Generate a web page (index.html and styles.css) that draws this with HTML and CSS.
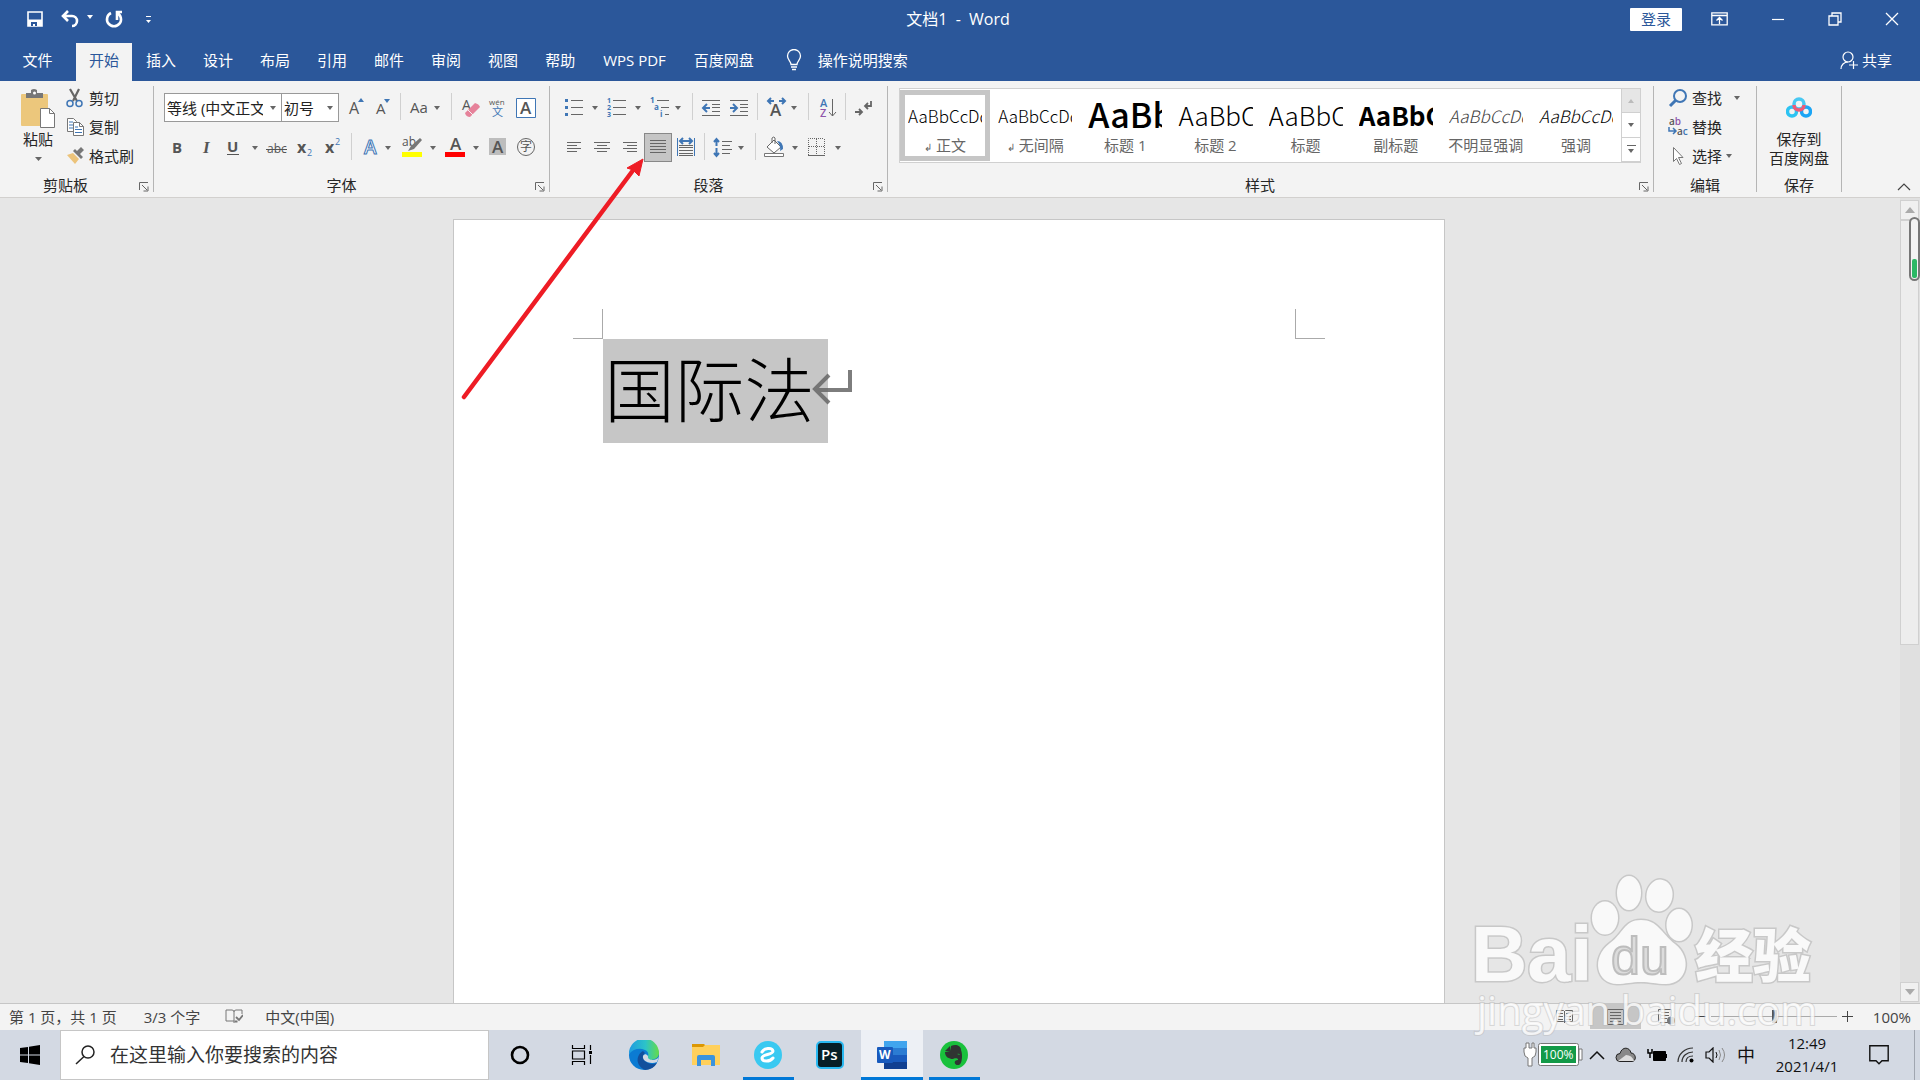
FILE: index.html
```html
<!DOCTYPE html>
<html lang="zh-CN">
<head>
    <meta charset="UTF-8">
    <meta name="viewport" content="width=device-width, initial-scale=1.0">
    <title>文档1 - Word</title>
    <link rel="stylesheet" href="styles.css">
</head>
<body>
    <header class="title-bar">
        <div class="quick-access">
            <button aria-label="保存"><svg width="16" height="16" viewBox="0 0 16 16"><path d="M1 1h14v14H1z" fill="none" stroke="#fff" stroke-width="1.6"/><path d="M1 8.5h14V15H1z" fill="#fff"/><path d="M4 11h6v4H8v-2H6v2H4z" fill="#2b579a"/></svg></button>
            <button aria-label="撤消"><svg width="32" height="18" viewBox="0 0 32 18"><path d="M7 1L2 6l5 5M2 6h9a5 5 0 0 1 0 10" fill="none" stroke="#fff" stroke-width="2.6"/><path d="M26 5h6l-3 4z" fill="#fff"/></svg></button>
            <button aria-label="重复"><svg width="18" height="18" viewBox="0 0 18 18"><path d="M6 3a7 7 0 1 0 6 0M12 10V2h5" fill="none" stroke="#fff" stroke-width="2.6"/></svg></button>
            <button aria-label="自定义快速访问工具栏"><svg width="8" height="10" viewBox="0 0 8 10"><path d="M1 2.500h5" stroke="#fff"/><path d="M1 6h5L3.500 9z" fill="#fff"/></svg></button>
        </div>
        <div class="doc-title">文档1&nbsp; -&nbsp; Word</div>
        <div class="window-buttons">
            <button class="login">登录</button>
            <button aria-label="功能区显示选项"><svg width="17" height="14" viewBox="0 0 17 14"><path d="M.8.8h15.400v12H.8zM1 3.500h15M8.500 12V6M5.500 8.500l3-3 3 3" fill="none" stroke="#fff" stroke-width="1.300"/></svg></button>
            <button aria-label="最小化"><svg width="14" height="14" viewBox="0 0 14 14"><path d="M1 7.500h12" stroke="#fff" stroke-width="1.200"/></svg></button>
            <button aria-label="还原"><svg width="14" height="14" viewBox="0 0 14 14"><path d="M1 4h9v9H1zM4 4V1h9v9h-3" fill="none" stroke="#fff" stroke-width="1.300"/></svg></button>
            <button aria-label="关闭"><svg width="14" height="14" viewBox="0 0 14 14"><path d="M1 1l12 12M13 1L1 13" stroke="#fff" stroke-width="1.300"/></svg></button>
        </div>
    </header>

    <nav class="tabs">
        <button class="file">文件</button>
        <button class="active">开始</button>
        <button>插入</button>
        <button>设计</button>
        <button>布局</button>
        <button>引用</button>
        <button>邮件</button>
        <button>审阅</button>
        <button>视图</button>
        <button>帮助</button>
        <button class="addin">WPS PDF</button>
        <button>百度网盘</button>
        <button class="tell-me"><svg width="16" height="22" viewBox="0 0 16 22"><path d="M5 15.500c0-3-3.500-4.500-3.500-8.500a6.500 6.500 0 0 1 13 0c0 4-3.500 5.500-3.500 8.500zM5 18h6M6 20.500h4" fill="none" stroke="#fff" stroke-width="1.300"/></svg>操作说明搜索</button>
        <button class="share"><svg width="18" height="18" viewBox="0 0 18 18"><circle cx="8" cy="6" r="5" fill="none" stroke="#fff" stroke-width="1.200"/><path d="M1 18c0-4 3-7 7-7M9 14h9M13.500 10v8" fill="none" stroke="#fff" stroke-width="1.200"/></svg>共享</button>
    </nav>

    <section class="ribbon">
        <div class="group clipboard">
            <div class="group-body">
                <button class="big-button">
                    <svg width="34" height="40" viewBox="0 0 34 40"><rect y="5" width="27" height="32" rx="1" fill="#ecc77c"/><path d="M5 4h5V1q3-2 6 0v3h6v5H5z" fill="#777"/><circle cx="13.500" cy="4" r="1.500" fill="#fff"/><path d="M19.500 19.500h9l5 5v14h-14z" fill="#fff" stroke="#777"/><path d="M28.500 19.500v5h5" fill="none" stroke="#777"/></svg>
                    <span>粘贴</span>
                    <svg width="7" height="4" viewBox="0 0 7 4"><path class="caret" d="M0 0h7l-3.500 4z"/></svg>
                </button>
                <div class="button-list">
                    <button><svg width="18" height="20" viewBox="0 0 18 20"><path d="M4 1l7 12M13 1L7 13" stroke="#666" stroke-width="2.200"/><circle cx="4" cy="15.500" r="3" fill="none" stroke="#3f76b5" stroke-width="1.500"/><circle cx="13" cy="15.500" r="3" fill="none" stroke="#3f76b5" stroke-width="1.500"/></svg>剪切</button>
                    <button><svg width="18" height="20" viewBox="0 0 18 20"><path d="M1.500 1.500h6l3 3v10h-9z" fill="#fff" stroke="#777"/><path d="M3 5h4M3 8h4M3 11h4" stroke="#3f76b5"/><path d="M7.500 5.500h6l4 4v9h-10z" fill="#fff" stroke="#777"/><path d="M13.500 5.500v4h4" fill="none" stroke="#777"/><path d="M9 10h3M9 12.500h7M9 15.500h7" stroke="#3f76b5"/></svg>复制</button>
                    <button><svg width="18" height="20" viewBox="0 0 18 20"><path d="M1 9l6-2 6 6-4 5z" fill="#ecc37a"/><path d="M7 5l8 8 2-2-3-3 4-4-3-3-4 4-2-2z" fill="#777"/></svg>格式刷</button>
                </div>
            </div>
            <div class="group-foot">剪贴板<button class="launcher" aria-label="剪贴板设置"><svg width="10" height="10" viewBox="0 0 10 10"><path d="M.5 8V.5H9M3 3l5 5M9 4.500V9H4.500" fill="none" stroke="#666"/></svg></button></div>
        </div>

        <div class="group font">
            <div class="group-body">
                <div class="tool-row font-row-1">
                    <label class="combo"><select aria-label="字体"><option>等线 (中文正文)</option></select></label>
                    <label class="combo size"><select aria-label="字号"><option>初号</option></select></label>
                    <button aria-label="增大字号"><svg width="32" height="29"><text x="10" y="21" font-size="16" class="glyph">A</text><path d="M19 9h6l-3-4z" fill="#3f76b5"/></svg></button>
                    <button aria-label="减小字号"><svg width="24" height="29"><text x="5" y="21" font-size="15" class="glyph">A</text><path d="M13 6h6l-3 4z" fill="#3f76b5"/></svg></button>
                    <i class="sep"></i>
                    <button aria-label="更改大小写"><svg width="40" height="29"><text x="4" y="20" font-size="15" class="glyph">Aa</text><path class="caret" d="M28 13h6l-3 4z"/></svg></button>
                    <i class="sep"></i>
                    <button aria-label="清除所有格式"><svg width="28" height="29"><text x="5" y="17" font-size="14" class="glyph">A</text><path d="M8 20l10-10q4 1 5 4L13 24q-4 0-5-4z" fill="#e6829a"/><path d="M11 17l5 5" stroke="#f3f3f3"/></svg></button>
                    <button aria-label="拼音指南"><svg width="24" height="29"><text x="4" y="12" font-size="8" class="glyph">wén</text><text x="7" y="23" font-size="11" fill="#3f76b5">文</text></svg></button>
                    <button aria-label="字符边框"><svg width="34" height="29"><path d="M7.500 5.500h19v19h-19z" fill="#fff" stroke="#3f76b5"/><text x="11" y="21" font-size="17" class="glyph strong">A</text></svg></button>
                </div>
                <div class="tool-row font-row-2">
                    <button aria-label="加粗"><svg width="26" height="29"><text x="8" y="20" font-size="15" class="glyph bold">B</text></svg></button>
                    <button aria-label="倾斜"><svg width="32" height="29"><text x="13" y="20" font-size="17" class="glyph italic">I</text></svg></button>
                    <button aria-label="下划线"><svg width="42" height="29"><text x="5" y="19" font-size="15" class="glyph bold">U</text><path d="M5 21.500h12" stroke="#555"/><path class="caret" d="M30 13h6l-3 4z"/></svg></button>
                    <button aria-label="删除线"><svg width="26" height="29"><text x="3" y="20" font-size="12" class="glyph">abc</text><path d="M2 16.500h21" stroke="#555"/></svg></button>
                    <button aria-label="下标"><svg width="30" height="29"><text x="7" y="20" font-size="16" class="glyph bold">x</text><text x="17" y="23" font-size="9" fill="#3f76b5">2</text></svg></button>
                    <button aria-label="上标"><svg width="26" height="29"><text x="5" y="20" font-size="16" class="glyph bold">x</text><text x="15" y="12" font-size="9" fill="#3f76b5">2</text></svg></button>
                    <i class="sep"></i>
                    <button aria-label="文本效果"><svg width="40" height="29"><text x="8" y="21" font-size="19" class="text-effect">A</text><path class="caret" d="M29 13h6l-3 4z"/></svg></button>
                    <button aria-label="突出显示"><svg width="44" height="29"><text x="6" y="13" font-size="12" class="glyph">ab</text><path d="M12 18l3-5 9-8 2 2-8 9z" fill="#777"/><path d="M6 19h20v5H6z" fill="#ff0"/><path class="caret" d="M34 13h6l-3 4z"/></svg></button>
                    <button aria-label="字体颜色"><svg width="44" height="29"><text x="10" y="17" font-size="17" class="glyph strong">A</text><path d="M5 19h20v5H5z" fill="red"/><path class="caret" d="M33 13h6l-3 4z"/></svg></button>
                    <button aria-label="字符底纹"><svg width="27" height="29"><path d="M5 5h17v17H5z" fill="#bdbdbd"/><text x="8" y="20" font-size="17" class="glyph strong">A</text></svg></button>
                    <button aria-label="带圈字符"><svg width="30" height="29"><circle cx="15" cy="14" r="8.500" fill="none" stroke="#666"/><text x="9" y="18" font-size="12" class="glyph">字</text></svg></button>
                </div>
            </div>
            <div class="group-foot">字体<button class="launcher" aria-label="字体设置"><svg width="10" height="10" viewBox="0 0 10 10"><path d="M.5 8V.5H9M3 3l5 5M9 4.500V9H4.500" fill="none" stroke="#666"/></svg></button></div>
        </div>

        <div class="group paragraph">
            <div class="group-body">
                <div class="tool-row para-row-1">
                    <button aria-label="项目符号"><svg width="44" height="29"><path d="M11 7.500h12M11 14.500h12M11 21.500h12" class="line"/><path d="M5 6h3v3H5zM5 13h3v3H5zM5 20h3v3H5z" fill="#3f76b5"/><path class="caret" d="M32 13h6l-3 4z"/></svg></button>
                    <button aria-label="编号"><svg width="42" height="29"><path d="M9 7.500h13M9 14.500h13M9 21.500h13" class="line"/><g fill="#3f76b5" font-size="7" font-weight="700"><text x="3" y="10">1</text><text x="3" y="17">2</text><text x="3" y="24">3</text></g><path class="caret" d="M31 13h6l-3 4z"/></svg></button>
                    <button aria-label="多级列表"><svg width="40" height="29"><path d="M11 7.500h12M15 14.500h8M19 21.500h4" class="line"/><g fill="#3f76b5" font-size="8" font-weight="700"><text x="4" y="10">1</text><text x="8" y="17">a</text><text x="14" y="24">i</text></g><path class="caret" d="M29 13h6l-3 4z"/></svg></button>
                    <i class="sep"></i>
                    <button aria-label="减少缩进量"><svg width="26" height="29"><path d="M4 7.500h18M14 11.500h8M14 14.500h8M14 18.500h8M4 22.500h18" class="line"/><path d="M12 15H6M9 11l-4 4 4 4" class="blue-line"/></svg></button>
                    <button aria-label="增加缩进量"><svg width="28" height="29"><path d="M6 7.500h18M16 11.500h8M16 14.500h8M16 18.500h8M6 22.500h18" class="line"/><path d="M6 15h6M9 11l4 4-4 4" class="blue-line"/></svg></button>
                    <i class="sep"></i>
                    <button aria-label="中文版式"><svg width="40" height="29"><text x="8" y="23" font-size="17" class="glyph strong">A</text><path d="M12 8H6M9 5L6 8l3 3M17 8h6M20 5l3 3-3 3" class="blue-line"/><path class="caret" d="M29 13h6l-3 4z"/></svg></button>
                    <i class="sep"></i>
                    <button aria-label="排序"><svg width="26" height="29"><text x="5" y="14" font-size="11" font-weight="600" fill="#3f76b5">A</text><text x="5" y="24" font-size="11" font-weight="600" fill="#8e55aa">Z</text><path d="M17.500 6v17M14 19l3.500 4 3.500-4" class="line"/></svg></button>
                    <i class="sep"></i>
                    <button aria-label="显示编辑标记"><svg width="30" height="29"><path d="M22 8v5h-6M19 10l-3 3 3 3M6 19h7M10 16l3 3-3 3" fill="none" stroke="#666" stroke-width="1.800"/></svg></button>
                </div>
                <div class="tool-row para-row-2">
                    <button aria-label="左对齐"><svg width="28" height="29"><path d="M7 9.500h14M7 12.500h10M7 15.500h14M7 18.500h10" class="line"/></svg></button>
                    <button aria-label="居中"><svg width="28" height="29"><path d="M6 9.500h16M9 12.500h10M6 15.500h16M9 18.500h10" class="line"/></svg></button>
                    <button aria-label="右对齐"><svg width="28" height="29"><path d="M7 9.500h14M11 12.500h10M7 15.500h14M11 18.500h10" class="line"/></svg></button>
                    <button class="pressed" aria-label="两端对齐"><svg width="26" height="27"><path d="M5 6.500h16M5 9.500h16M5 12.500h16M5 15.500h16M5 18.500h16" class="line"/></svg></button>
                    <button aria-label="分散对齐"><svg width="28" height="29"><path d="M7 12.500h14M7 14.500h14M7 17.500h14M7 20.500h14M7 22.500h14" class="line"/><path d="M5.500 5v18M22.500 5v18" stroke="#3f76b5"/><path d="M8 8h12M11 5L8 8l3 3M17 5l3 3-3 3" class="blue-line"/></svg></button>
                    <i class="sep"></i>
                    <button aria-label="行距"><svg width="42" height="29"><path d="M14 8.500h10M14 12.500h8M14 16.500h10M14 20.500h8" class="line"/><path d="M8.500 7v6M6 9l2.500-3L11 9M8.500 15v7M6 20l2.500 3 2.500-3" class="blue-line"/><path class="caret" d="M30 13h6l-3 4z"/></svg></button>
                    <i class="sep"></i>
                    <button aria-label="底纹"><svg width="41" height="29"><path d="M6 14l7-7 7 7-7 6zM11 10V5q2-2 3 0v6" fill="#fff" stroke="#666"/><path d="M16 8q6 0 6 8l-3 2q1-5-3-10" fill="#3f76b5"/><path d="M3.500 20.500h19v3h-19z" fill="#fff" stroke="#777"/><path class="caret" d="M31 13h6l-3 4z"/></svg></button>
                    <button aria-label="边框"><svg width="44" height="29"><path d="M6.500 22V5.500H22M22.500 6v16M14.500 6v16M7 13.500h15" fill="none" stroke="#666" stroke-dasharray="1 1"/><path d="M6 22.500h17" class="line"/><path class="caret" d="M33 13h6l-3 4z"/></svg></button>
                </div>
            </div>
            <div class="group-foot">段落<button class="launcher" aria-label="段落设置"><svg width="10" height="10" viewBox="0 0 10 10"><path d="M.5 8V.5H9M3 3l5 5M9 4.500V9H4.500" fill="none" stroke="#666"/></svg></button></div>
        </div>

        <div class="group styles">
            <div class="group-body">
                <div class="gallery">
                    <button class="style selected"><span class="sample">AaBbCcDd</span><span class="style-name"><small>↲</small> 正文</span></button>
                    <button class="style"><span class="sample">AaBbCcDd</span><span class="style-name"><small>↲</small> 无间隔</span></button>
                    <button class="style"><span class="sample h1">AaBb</span><span class="style-name">标题 1</span></button>
                    <button class="style"><span class="sample h2">AaBbC</span><span class="style-name">标题 2</span></button>
                    <button class="style"><span class="sample h2">AaBbC</span><span class="style-name">标题</span></button>
                    <button class="style"><span class="sample h2 heavy">AaBbC</span><span class="style-name">副标题</span></button>
                    <button class="style"><span class="sample slant muted">AaBbCcDd</span><span class="style-name">不明显强调</span></button>
                    <button class="style"><span class="sample slant">AaBbCcDd</span><span class="style-name">强调</span></button>
                    <div class="gallery-scroll">
                        <button class="off" aria-label="上一行"><svg width="7" height="4"><path d="M0 4h6L3 0z" fill="#bbb"/></svg></button>
                        <button aria-label="下一行"><svg width="7" height="4"><path class="caret" d="M0 0h6L3 4z"/></svg></button>
                        <button aria-label="其他"><svg width="9" height="8"><path d="M0 .5h9" stroke="#666"/><path class="caret" d="M1 4h6L4 8z"/></svg></button>
                    </div>
                </div>
            </div>
            <div class="group-foot">样式<button class="launcher" aria-label="样式设置"><svg width="10" height="10" viewBox="0 0 10 10"><path d="M.5 8V.5H9M3 3l5 5M9 4.500V9H4.500" fill="none" stroke="#666"/></svg></button></div>
        </div>

        <div class="group editing">
            <div class="group-body">
                <div class="button-list">
                    <button><svg width="20" height="20" viewBox="0 0 20 20"><circle cx="12" cy="8" r="6" fill="none" stroke="#3f76b5" stroke-width="2"/><path d="M8 12l-6 6" stroke="#3f76b5" stroke-width="3"/></svg>查找<svg class="far-caret" width="7" height="4"><path class="caret" d="M0 0h6L3 4z"/></svg></button>
                    <button><svg width="20" height="20" viewBox="0 0 20 20"><g font-size="10" font-weight="600"><text x="1" y="8" fill="#555">a<tspan fill="#8e55aa">b</tspan></text><text x="9" y="18" fill="#555">a<tspan fill="#3f76b5">c</tspan></text></g><path d="M1 10v4h6M5 11l3 3-3 3" fill="none" stroke="#3f76b5" stroke-width="1.500"/></svg>替换</button>
                    <button><svg width="20" height="20" viewBox="0 0 20 20"><path d="M5.500 1.500v14l3-3 3 6 2-1-3-6h4.500z" fill="#fff" stroke="#777"/></svg>选择<svg width="7" height="4"><path class="caret" d="M0 0h6L3 4z"/></svg></button>
                </div>
            </div>
            <div class="group-foot">编辑</div>
        </div>

        <div class="group saving">
            <div class="group-body">
                <button class="big-button cloud">
                    <svg width="26" height="22" viewBox="0 0 26 22"><g fill="none" stroke-width="3.500"><circle cx="6" cy="14.500" r="4.500" stroke="#2cc3f2"/><circle cx="20" cy="14.500" r="4.500" stroke="#1ba5f5"/><circle cx="13" cy="7" r="5" stroke="#48c8f2"/><path d="M8 8a5 5 0 0 0 10 0" stroke="#ef5a76"/></g></svg>
                    <span>保存到<br>百度网盘</span>
                </button>
            </div>
            <div class="group-foot">保存</div>
        </div>
        <button class="collapse" aria-label="折叠功能区"><svg width="14" height="8" viewBox="0 0 14 8"><path d="M1 7l6-6 6 6" fill="none" stroke="#444" stroke-width="1.200"/></svg></button>
    </section>

    <main class="workspace">
        <div class="canvas">
            <article class="page">
                <div class="crop-marks"><i class="mark-left"></i><i class="mark-right"></i></div>
                <p class="line-text"><span class="selection">国际法</span><svg class="return" width="40" height="36" viewBox="0 0 40 36"><path d="M38 1v20H4M17 6L3 20l14 14" fill="none" stroke="#666" stroke-width="4" opacity=".85"/></svg></p>
            </article>
        </div>
        <div class="scrollbar">
            <button aria-label="向上滚动"><svg width="10" height="6"><path d="M0 6h10L5 0z" fill="#aaa"/></svg></button>
            <div class="thumb"></div>
            <button class="down" aria-label="向下滚动"><svg width="10" height="6"><path d="M0 0h10L5 6z" fill="#aaa"/></svg></button>
            <div class="meter"></div>
        </div>
    </main>

    <footer class="status-bar">
        <span class="pages">第 1 页，共 1 页</span>
        <span class="words">3/3 个字</span>
        <svg width="18" height="15" viewBox="0 0 18 15"><path d="M9 3v11M9 12H1V1h6q2 0 2 2 0-2 2-2h6v4" fill="none" stroke="#777"/><path d="M9.500 12.500h3M11 8l3 3 4-5" fill="none" stroke="#777" stroke-width="1.800"/></svg>
        <span class="language">中文(中国)</span>
        <div class="views">
            <button aria-label="阅读视图"><svg width="17" height="15" viewBox="0 0 17 15"><path d="M.5 1.500h7l1 1 1-1h7v11h-7l-1 1-1-1h-7zM8.500 2v12M2 4.500h5M2 7.500h5M2 10.500h5M10 4.500h5M10 7.500h5M10 10.500h5" fill="none" stroke="#666"/></svg></button>
            <button class="current" aria-label="页面视图"><svg width="17" height="16" viewBox="0 0 17 16"><path d="M.5.5h16v15H.5zM3 3.500h11M3 6.500h11M3 9.500h11M3 12.500h11" fill="none" stroke="#666"/></svg></button>
            <button aria-label="Web 版式视图"><svg width="17" height="16" viewBox="0 0 17 16"><path d="M10 13.500H.5V.500h13V7M3 3.500h8M3 6.500h8M3 9.500h6" fill="none" stroke="#666"/><circle cx="13" cy="11.500" r="4" fill="#777"/></svg></button>
        </div>
        <div class="zoom">
            <button aria-label="缩小"><svg width="11" height="11"><path d="M0 5.500h11" stroke="#444"/></svg></button>
            <input type="range" min="0" max="100" value="50" aria-label="显示比例">
            <button aria-label="放大"><svg width="11" height="11"><path d="M0 5.500h11M5.500 0v11" stroke="#444"/></svg></button>
            <span>100%</span>
        </div>
    </footer>

    <footer class="taskbar">
        <button class="start" aria-label="开始菜单"><svg width="20" height="20" viewBox="0 0 20 20"><path d="M0 3l8-1v7.500H0zM9 1.800L20 0v9.500H9zM0 10.500h8V18l-8-1zM9 10.500h11V20L9 18.200z"/></svg></button>
        <label class="search"><svg width="20" height="20" viewBox="0 0 20 20"><circle cx="13" cy="7" r="6" fill="none" stroke="#222" stroke-width="1.500"/><path d="M9 11.500L1 19" stroke="#222" stroke-width="1.500"/></svg><input type="text" placeholder="在这里输入你要搜索的内容" aria-label="搜索"></label>
        <div class="apps">
            <button aria-label="Cortana"><svg width="20" height="20" viewBox="0 0 20 20"><circle cx="10" cy="10" r="8" fill="none" stroke="#000" stroke-width="2.600"/></svg></button>
            <button aria-label="任务视图"><svg width="22" height="20" viewBox="0 0 22 20"><path d="M1.500 0v3.500h12V0M1.500 20v-3.500h12V20M1.500 6h12v8h-12zM19.500 0v5M19.500 10v9" fill="none" stroke="#000" stroke-width="1.200"/><path d="M18 6h3v3h-3z"/></svg></button>
            <button aria-label="Edge"><svg width="30" height="30" viewBox="0 0 30 30"><defs><linearGradient id="edge-top"><stop offset="0" stop-color="#1d9be0"/><stop offset=".55" stop-color="#2cc3c9"/><stop offset="1" stop-color="#66dc48"/></linearGradient></defs><circle cx="15" cy="15" r="15" fill="#0b7bd3"/><path d="M0 14A15 15 0 0 1 30 13c0 5-5 7-9 7-3 0-4-2-2-4 1-2 0-6-6-7Q5 8 0 14z" fill="url(#edge-top)"/><path d="M14 11c-7 4-8 14 2 19q8 0 12-7-5 2-9 0c-5-2-6-8-3-10z" fill="#124f9c"/><path d="M19 16c-3-4-7 0-4 4 3 3 9 4 13 2l2-5c-3 4-12 4-11-1z" fill="#d3d9e3"/></svg></button>
            <button aria-label="文件资源管理器"><svg width="28" height="24" viewBox="0 0 28 24"><path d="M0 1h12l2 2-2 3H0z" fill="#dc9703"/><path d="M0 4h11l2-2h15v20H0z" fill="#ffd05c"/><path d="M5 23V14q0-2 2-2h14q2 0 2 2v9h-4v-6H9v6z" fill="#3b93dd"/></svg></button>
            <button class="running" aria-label="浏览器"><svg width="28" height="28" viewBox="0 0 28 28"><circle cx="14" cy="14" r="14" fill="#39c9f1"/><path d="M8 11c2-4 10-5 11-1 0 4-11 3-11 7 0 4 8 4 11 0" fill="none" stroke="#fff" stroke-width="3" stroke-linecap="round"/></svg></button>
            <button aria-label="Photoshop"><svg width="28" height="28" viewBox="0 0 28 28"><rect x="1" y="1" width="26" height="26" rx="4" fill="#061e26" stroke="#29b8f0" stroke-width="2"/><text x="5" y="19" font-size="15" font-weight="600" fill="#fff">Ps</text></svg></button>
            <button class="running focused" aria-label="Word"><svg width="30" height="28" viewBox="0 0 30 28"><path d="M7 0h23v7H7z" fill="#41a5ee"/><path d="M7 7h23v7H7z" fill="#2b7cd3"/><path d="M7 14h23v7H7z" fill="#185abd"/><path d="M7 21h23v7H7z" fill="#103f91"/><rect y="6" width="16" height="16" rx="1" fill="#185abd"/><text x="2" y="18" font-size="12" font-weight="700" fill="#fff">W</text></svg></button>
            <button class="running" aria-label="印象笔记"><svg width="28" height="28" viewBox="0 0 28 28"><circle cx="14" cy="14" r="14" fill="#19c13c"/><path d="M11 5c4-2 10-1 10 4 2 5 1 14-2 15-5 1-6-5-1-5 1-2-4-2-5-1-4 0-8-2-8-7l5-1z" fill="#303432"/><path d="M10 5v5H5z" fill="#303432"/><path d="M17 13q2-1 3 1z" fill="#19c13c"/></svg></button>
        </div>
        <div class="tray">
            <svg width="60" height="26" viewBox="0 0 60 26"><path d="M3 1v5H1v4q0 5 4 6v8h4v-8q4-1 4-6V6h-2V1H9v5H6V1z" fill="#fff" stroke="#777"/><rect x="15.500" y="1.500" width="40" height="22" rx="2" fill="#fff" stroke="#777"/><path d="M56 7h3v11h-3z" fill="#fff" stroke="#777"/><path d="M18 4h35v17H18z" fill="#129a48"/><text x="20" y="17" font-size="12" fill="#fff">100%</text></svg>
            <svg width="16" height="10" viewBox="0 0 16 10"><path d="M1 9l7-7 7 7" fill="none" stroke="#111" stroke-width="1.500"/></svg>
            <svg width="22" height="16" viewBox="0 0 22 16"><path d="M5 14.500a4 4 0 0 1 0-8C7-1 15 0 16 6c5 0 6 8 1 8.500z" fill="#888" stroke="#222"/><path d="M3 14l8-6q6 0 8 6z" fill="#ddd"/></svg>
            <svg width="20" height="16" viewBox="0 0 20 16"><path d="M6.500 4.500h12v9h-12z" fill="#000" stroke="#000"/><path d="M18 7h2v4h-2z"/><path d="M1 2v4h4V2M3 6v5" fill="none" stroke="#000" stroke-width="1.500"/></svg>
            <svg width="18" height="16" viewBox="0 0 18 16"><path d="M1 15C1 7 8 1 16 1M5 15c0-6 5-10 11-10M9 15c0-4 3-6 7-6" fill="none" stroke="#333" stroke-width="1.200"/><circle cx="14.500" cy="13.500" r="2"/></svg>
            <svg width="22" height="16" viewBox="0 0 22 16"><path d="M1 5h3l4-4v14l-4-4H1z" fill="none" stroke="#111" stroke-width="1.200"/><path d="M11 5q2 3 0 6" fill="none" stroke="#111"/><path d="M14 3q3 5 0 10M17 1q5 7 0 14" fill="none" stroke="#888"/></svg>
            <span class="ime">中</span>
            <time class="clock" datetime="2021-04-01T12:49">12:49<br>2021/4/1</time>
            <svg width="20" height="20" viewBox="0 0 20 20"><path d="M.8.8h18.400v15H13l-3 3-3-3H.8z" fill="none" stroke="#111" stroke-width="1.400"/></svg>
        </div>
    </footer>

    <svg class="pointer-arrow" width="190" height="248" viewBox="0 0 190 248" aria-hidden="true">
        <path d="M4 242L174 14" stroke="#ee1c25" stroke-width="4.500" stroke-linecap="round"/>
        <path d="M183 4l-16 9 6 2 6 6z" fill="#ee1c25" stroke="#ee1c25"/>
    </svg>

    <svg class="watermark" width="360" height="170" viewBox="0 0 360 170" aria-hidden="true">
        <g class="mark">
            <text x="9" y="111" class="mark-latin">Bai</text>
            <ellipse cx="143" cy="48" rx="13" ry="16.500"/>
            <ellipse cx="167" cy="23" rx="12" ry="17"/>
            <ellipse cx="197.500" cy="25.500" rx="13" ry="16" transform="rotate(8 197.500 25.500)"/>
            <ellipse cx="217" cy="55" rx="12.500" ry="16"/>
            <path d="M179 50c-17 0-18 14-31 23-20 15-13 41 7 41 9 0 14-2 24-2s14 2 25 2c21 0 27-26 9-40-14-11-17-24-34-24z"/>
            <text x="233" y="107" class="mark-cjk">经验</text>
        </g>
        <text x="149" y="104" class="mark-du">du</text>
        <text x="15" y="155" class="mark-url">jingyan.baidu.com</text>
    </svg>
</body>
</html>
```
FILE: styles.css
```css
* {
    box-sizing: border-box;
}
body {
    margin: 0;
    height: 100vh;
    display: flex;
    flex-direction: column;
    overflow: hidden;
    position: relative;
    font-family: "Open Sans", "Noto Sans CJK SC", sans-serif;
    font-size: 15px;
    line-height: 20px;
    color: #262626;
    background-color: #e6e6e6;
}
button {
    display: flex;
    align-items: center;
    justify-content: center;
    padding: 0;
    border: none;
    background: none;
    color: inherit;
    font: inherit;
    white-space: nowrap;
}
svg {
    display: block;
    flex: none;
}

/* title bar */
.title-bar {
    display: grid;
    grid-template-columns: 1fr auto 1fr;
    align-items: center;
    height: 43px;
    padding: 0 21px 5px 27px;
    background-color: #2b579a;
    color: #fff;
}
.doc-title {
    padding-right: 10px;
    font-size: 16px;
}
.quick-access {
    display: flex;
    align-items: center;
    gap: 18px;
}
.quick-access button:nth-child(3) {
    margin: 0 4px 0 -6px;
}
.window-buttons {
    display: flex;
    align-items: center;
    justify-content: flex-end;
    gap: 43px;
}
.login {
    width: 52px;
    height: 23px;
    margin-right: -14px;
    border-radius: 1px;
    background-color: #fff;
    color: #2b579a;
}

/* ribbon tabs */
.tabs {
    display: flex;
    gap: 1px;
    height: 38px;
    padding-right: 28px;
    background-color: #2b579a;
    color: #fff;
}
.tabs button {
    padding: 0 13px 4px;
}
.tabs .file {
    width: 75px;
}
.tabs .active {
    background-color: #f3f3f3;
    color: #2b579a;
}
.tabs .addin {
    padding: 0 14px 4px;
}
.tabs .tell-me {
    gap: 16px;
    padding-left: 18px;
}
.tabs .share {
    gap: 4px;
    margin-left: auto;
    padding-right: 0;
}

/* ribbon */
.ribbon {
    display: flex;
    height: 117px;
    padding: 5px 0;
    background-color: #f3f3f3;
    border-bottom: 1px solid #d2d0ce;
}
.group {
    display: flex;
    flex-direction: column;
    border-right: 1px solid #b5b5b5;
}
.group-body {
    flex: 1;
}
.group-foot {
    position: relative;
    height: 16px;
    line-height: 18px;
    text-align: center;
}
.launcher {
    position: absolute;
    right: 4px;
    bottom: 0;
}
.clipboard {
    width: 154px;
}
.clipboard .group-foot {
    padding-right: 22px;
}
.clipboard .group-body {
    display: flex;
    gap: 11px;
    padding-left: 21px;
}
.big-button {
    flex-direction: column;
    justify-content: flex-start;
    padding-top: 3px;
}
.big-button span + svg {
    margin-top: 8px;
}
.button-list {
    display: flex;
    flex-direction: column;
    align-items: flex-start;
    gap: 5px;
}
.button-list button {
    gap: 5px;
    height: 24px;
}
.font {
    width: 396px;
}
.font .group-foot {
    padding-right: 20px;
}
.paragraph {
    width: 338px;
}
.paragraph .group-foot {
    padding-right: 20px;
}
.font .group-body,
.paragraph .group-body {
    display: flex;
    flex-direction: column;
    gap: 11px;
    padding: 7px 10px 0;
}
.tool-row {
    display: grid;
    height: 29px;
}
.font-row-1 {
    grid-template-columns: 118px 57px 32px 24px 11px 40px 11px 28px 24px 34px;
}
.font-row-2 {
    grid-template-columns: 26px 32px 42px 26px 30px 26px 10px 40px 44px 44px 27px 30px;
}
.para-row-1 {
    grid-template-columns: 44px 42px 40px 12px 26px 28px 10px 40px 13px 26px 8px 30px;
}
.para-row-2 {
    grid-template-columns: 28px 28px 28px 28px 28px 8px 42px 11px 41px 44px;
}
.sep {
    justify-self: center;
    width: 1px;
    height: 27px;
    background-color: #d0d0d0;
}
.caret {
    fill: #666;
}
.line {
    fill: none;
    stroke: #666;
}
.blue-line {
    fill: none;
    stroke: #3f76b5;
    stroke-width: 2;
}
.glyph {
    fill: #555;
}
.strong {
    font-weight: 600;
}
.bold {
    font-weight: 700;
}
.italic {
    font-family: "Liberation Serif", serif;
    font-style: italic;
    font-weight: 700;
}
.text-effect {
    fill: #fff;
    stroke: #3f76b5;
    stroke-width: 1;
    font-weight: 600;
}
.pressed {
    border: 1px solid #888;
    background-color: #c5c5c5;
}
.combo {
    position: relative;
    height: 29px;
}
.combo select {
    width: 100%;
    height: 29px;
    padding: 0 18px 0 2px;
    appearance: none;
    border: 1px solid #999;
    border-radius: 0;
    background-color: #fff;
    color: #222;
    font: inherit;
    text-overflow: clip;
}
.combo.size select {
    border-left: none;
}
.combo::after {
    content: "";
    position: absolute;
    top: 13px;
    right: 6px;
    border: 3px solid transparent;
    border-top: 4px solid #666;
    border-bottom: none;
}

/* style gallery */
.styles {
    flex: 1;
    padding-left: 11px;
}
.styles .group-body {
    padding: 2px 12px 0 0;
}
.styles .group-foot {
    padding-right: 32px;
}
.gallery {
    display: grid;
    grid-template-columns: repeat(8, 1fr) 19px;
    height: 75px;
    border: 1px solid #d0d0d0;
    background-color: #fff;
}
.style {
    flex-direction: column;
    justify-content: flex-end;
    min-width: 0;
    height: 71px;
    margin-top: 1px;
    padding: 0 3px 1px;
    border: 5px solid transparent;
    color: #666;
    overflow: hidden;
}
.style.selected {
    border-color: #c6c6c6;
}
.style-name {
    height: 20px;
}
.style small {
    font-size: 10px;
    line-height: 10px;
}
.sample {
    width: 100%;
    height: 38px;
    overflow: hidden;
    color: #000;
    font-family: "Noto Sans CJK SC", sans-serif;
    font-size: 17px;
    font-weight: 300;
    line-height: 38px;
    text-align: left;
}
.sample.h1 {
    font-size: 34px;
    font-weight: 500;
    line-height: 34px;
}
.sample.h2 {
    font-size: 26px;
    line-height: 36px;
}
.sample.heavy {
    font-weight: 700;
}
.sample.slant {
    font-style: italic;
}
.sample.muted {
    color: #404040;
}
.gallery-scroll {
    display: grid;
    grid-template-rows: 1fr 1fr 1fr;
}
.gallery-scroll button {
    border-left: 1px solid #d0d0d0;
    border-bottom: 1px solid #d0d0d0;
}
.gallery-scroll .off {
    background-color: #e6e6e6;
}
.editing {
    width: 103px;
}
.editing .group-body {
    padding-left: 14px;
}
.editing .button-list button {
    gap: 4px;
}
.far-caret {
    margin-left: 8px;
}
.saving {
    width: 85px;
}
.big-button.cloud {
    width: 100%;
    padding-top: 11px;
    gap: 11px;
    line-height: 19px;
}
.collapse {
    width: 78px;
    padding: 0 0 1px 46px;
    align-items: flex-end;
}

/* document */
.workspace {
    display: flex;
    flex: 1;
    min-height: 0;
}
.canvas {
    flex: 1;
    padding: 21px 3px 0 0;
    overflow: hidden;
}
.page {
    width: 992px;
    height: 100%;
    margin: 0 auto;
    padding: 89px 119px 0;
    border: 1px solid #c6c6c6;
    border-bottom: none;
    background-color: #fff;
}
.crop-marks {
    display: flex;
    justify-content: space-between;
}
.mark-left,
.mark-right {
    width: 30px;
    height: 30px;
    border-bottom: 1px solid #aaa;
}
.mark-left {
    border-right: 1px solid #aaa;
}
.mark-right {
    border-left: 1px solid #aaa;
}
.line-text {
    display: flex;
    align-items: center;
    margin: 0;
    padding-left: 30px;
}
.selection {
    width: 225px;
    height: 104px;
    padding-left: 2px;
    background-color: #c6c6c6;
    color: #000;
    font-family: "Noto Sans CJK SC", sans-serif;
    font-size: 70px;
    font-weight: 300;
    line-height: 96px;
}
.return {
    margin: -8px 0 0 -16px;
}
.scrollbar {
    position: relative;
    display: flex;
    flex-direction: column;
    width: 20px;
    padding: 2px 1px 1px 0;
    background-color: #e0e0e0;
}
.scrollbar button {
    height: 20px;
    border: 1px solid #d0d0d0;
    background-color: #f0f0f0;
}
.scrollbar .down {
    margin-top: auto;
}
.thumb {
    height: 53%;
    border: 1px solid #d0d0d0;
    background-color: #ededed;
}
.meter {
    position: absolute;
    top: 19px;
    right: 0;
    width: 11px;
    height: 64px;
    padding: 40px 1px 1px;
    border: 2px solid #777;
    border-radius: 6px;
    background-color: #f3f3f3;
}
.meter::after {
    content: "";
    display: block;
    height: 19px;
    border-radius: 2px;
    background-color: #2bb865;
}

/* status bar */
.status-bar {
    display: flex;
    align-items: center;
    height: 27px;
    padding: 0 9px 1px;
    border-top: 1px solid #c6c6c6;
    background-color: #f3f3f3;
    color: #444;
}
.words {
    margin: 0 25px 0 27px;
}
.language {
    margin-left: 22px;
}
.views {
    display: flex;
    align-self: stretch;
    margin-left: auto;
}
.views button {
    width: 51px;
}
.views .current {
    background-color: #c6c6c6;
}
.zoom {
    display: flex;
    align-items: center;
    width: 219px;
    padding-left: 3px;
}
.zoom input {
    width: 126px;
    height: 14px;
    margin: 0 5px;
    appearance: none;
    background: linear-gradient(#aaa, #aaa) center / 100% 1px no-repeat;
}
.zoom input::-webkit-slider-thumb {
    appearance: none;
    width: 5px;
    height: 13px;
    background-color: #555;
}
.zoom span {
    margin-left: auto;
}

/* taskbar */
.taskbar {
    display: flex;
    align-items: stretch;
    height: 50px;
    background-color: #d3d9e3;
    color: #111;
}
.start {
    width: 60px;
}
.search {
    display: flex;
    align-items: center;
    gap: 15px;
    width: 429px;
    padding-left: 14px;
    border: 1px solid #c6c6c6;
    background-color: #fff;
}
.search input {
    flex: 1;
    padding: 0;
    border: none;
    background: none;
    font: inherit;
    font-size: 19px;
}
.search input::placeholder {
    color: #333;
}
.apps {
    display: flex;
}
.apps button {
    width: 62px;
}
.apps .running {
    background: linear-gradient(#0078d7, #0078d7) center bottom / 51px 3px no-repeat;
}
.apps .focused {
    background: linear-gradient(#0078d7, #0078d7) center bottom / 100% 3px no-repeat #edf0f5;
}
.tray {
    display: flex;
    align-items: center;
    gap: 10px;
    margin: 0 5px 0 auto;
    padding-right: 25px;
    border-right: 1px solid #a0a6b0;
}
.tray > svg:first-child {
    margin-right: -4px;
}
.ime {
    font-size: 18px;
}
.clock {
    width: 84px;
    margin-right: 10px;
    line-height: 23px;
    text-align: center;
}

/* overlays */
.pointer-arrow {
    position: absolute;
    top: 155px;
    left: 460px;
    fill: none;
    pointer-events: none;
}
.watermark {
    position: absolute;
    right: 98px;
    bottom: 40px;
    pointer-events: none;
    overflow: visible;
}
.mark {
    fill: #f9f9f9;
    stroke: #c8c8c8;
    stroke-width: 3px;
    paint-order: stroke;
}
.mark-latin {
    font-family: "Liberation Sans", sans-serif;
    font-size: 78px;
    font-weight: 700;
}
.mark-cjk {
    font-size: 58px;
    font-weight: 900;
}
.mark-du {
    fill: #dcdcdc;
    stroke: #bdbdbd;
    stroke-width: 2px;
    font-family: "Liberation Sans", sans-serif;
    font-size: 52px;
}
.mark-url {
    fill: #fff;
    fill-opacity: 0.8;
    stroke: #bbb;
    stroke-opacity: 0.5;
    stroke-width: 2px;
    paint-order: stroke;
    font-size: 40px;
}
```
